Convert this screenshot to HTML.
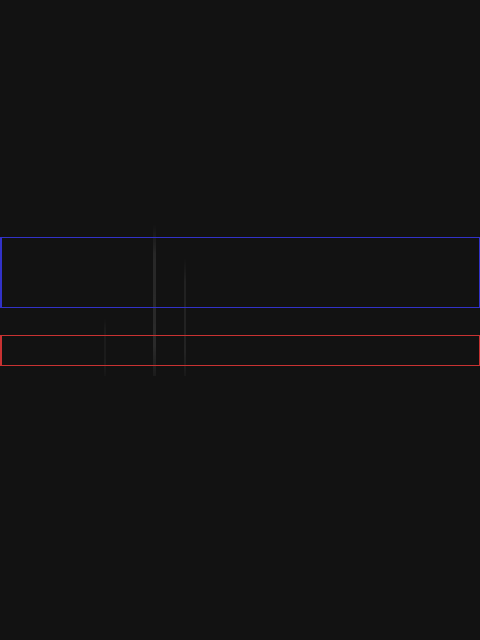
<!DOCTYPE html>
<html><head><meta charset="utf-8"><style>
html,body{margin:0;padding:0;width:480px;height:640px;background:#121212;overflow:hidden;position:relative}
.b{position:absolute;box-sizing:border-box}
.s{position:absolute;width:3px;background:linear-gradient(to bottom,rgba(255,255,255,0),rgba(255,255,255,0.09) 20%,rgba(255,255,255,0.1) 80%,rgba(255,255,255,0.04))}
</style></head><body>
<div class="s" style="left:153px;top:224px;height:152px"></div>
<div class="s" style="left:184px;top:258px;height:118px;width:2px;opacity:.7"></div>
<div class="s" style="left:104px;top:318px;height:58px;width:2px;opacity:.4"></div>
<div class="b" style="left:0;top:237px;width:480px;height:71px;border:1px solid #3232c8;border-left:2px solid #3232c8"></div>
<div class="b" style="left:0;top:335px;width:480px;height:31px;border:1px solid #c83232;border-left:2px solid #c83232"></div>
</body></html>
